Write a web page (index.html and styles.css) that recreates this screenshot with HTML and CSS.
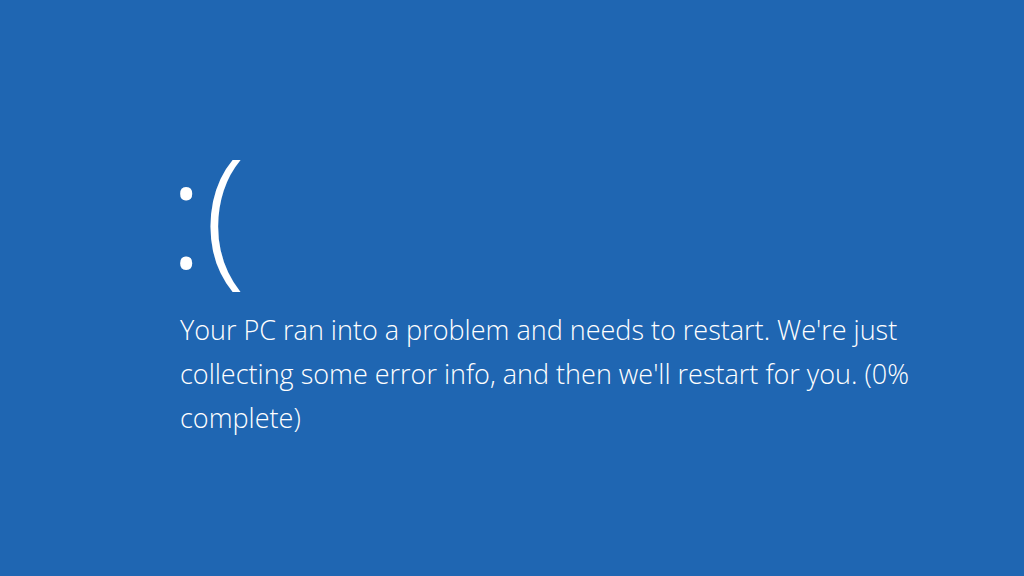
FILE: index.html
```html
<!DOCTYPE html>
<html lang="en">
<head>
    <meta charset="UTF-8">
    <title>Your PC ran into a problem</title>
    <link rel="stylesheet" href="styles.css">
</head>
<body>
    <div class="screen">
        <div class="face">:(</div>
        <p class="message">Your PC ran into a problem and needs to restart. We're just collecting some error info, and then we'll restart for you. (0% complete)</p>
    </div>
</body>
</html>
```

FILE: styles.css
```css
html, body {
    margin: 0;
    padding: 0;
    height: 100%;
}

body {
    background-color: #1f66b2;
    color: #ffffff;
    font-family: "Open Sans", "Noto Sans", sans-serif;
    overflow: hidden;
}

.screen {
    padding: 135px 0 0 168px;
}

.face {
    font-size: 152px;
    font-weight: 300;
    line-height: 150px;
    height: 150px;
}

.message {
    margin: 23px 0 0 12px;
    width: 760px;
    font-size: 27px;
    font-weight: 300;
    line-height: 44px;
}
```
